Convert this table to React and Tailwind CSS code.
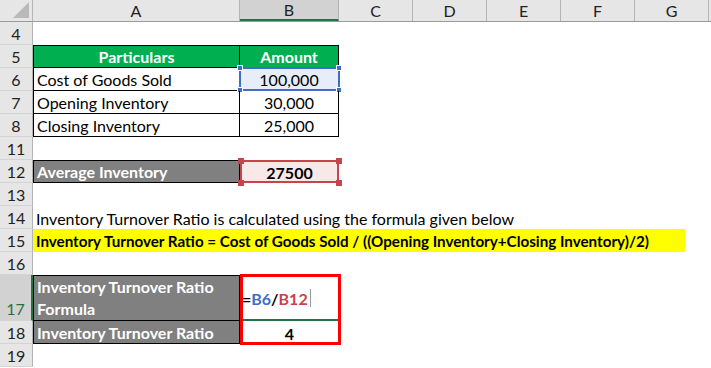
import React from 'react';

const COLS = ['A', 'B', 'C', 'D', 'E', 'F', 'G'];
const WIDTHS = ['w-[207px]', 'w-[99px]', 'w-[74px]', 'w-[74px]', 'w-[74px]', 'w-[74px]', 'w-[74px]'];

function Handle({ className }) {
  return <span className={`absolute w-[6px] h-[6px] ${className}`} />;
}

function RowHead({ n, tall, active }) {
  return (
    <div
      className={`w-[33px] shrink-0 flex justify-center border-b border-[#d4d4d4] text-[16px] text-[#222] ${tall ? 'items-end pb-[1px]' : 'items-center'} ${active ? 'bg-[#d2d2d2] border-r-2 border-r-[#217346] text-[#217346]' : 'bg-[#e6e6e6] border-r border-r-[#b4b4b4]'}`}
    >
      {n}
    </div>
  );
}

function Row({ n, tall, active, children }) {
  return (
    <div className={`flex ${tall ? 'h-[46px]' : 'h-[23px]'}`}>
      <RowHead n={n} tall={tall} active={active} />
      <div className="flex-1 flex relative">{children}</div>
    </div>
  );
}

export default function App() {
  return (
    <div className="w-[711px] h-[368px] overflow-hidden bg-white font-['Lato','Liberation_Sans',sans-serif] leading-[21px] text-black select-none">
      {/* column header */}
      <div className="flex h-[22px] bg-[#e6e6e6] border-b border-[#9b9b9b]">
        <div className="w-[33px] shrink-0 relative border-r border-[#b4b4b4]">
          <svg className="absolute right-[3px] bottom-[3px]" width="16" height="16" viewBox="0 0 16 16">
            <polygon points="16,0 16,16 0,16" fill="#b9b9b9" />
          </svg>
        </div>
        {COLS.map((c, i) => (
          <div
            key={c}
            className={`${WIDTHS[i]} shrink-0 flex items-center justify-center text-[16px] text-[#222] border-r border-[#b4b4b4] ${c === 'B' ? 'bg-[#d2d2d2] border-b-2 border-b-[#217346]' : ''}`}
          >
            {c}
          </div>
        ))}
      </div>

      <Row n={4} />

      <Row n={5}>
        <div className="w-[207px] bg-[#00b050] border border-black text-white font-bold text-[16px] flex items-end justify-center">
          Particulars
        </div>
        <div className="w-[99px] bg-[#00b050] border border-l-0 border-black text-white font-bold text-[16px] flex items-end justify-center">
          Amount
        </div>
      </Row>

      <Row n={6}>
        <div className="w-[207px] border-x border-b border-black text-[16px] flex items-end pl-[3px]">
          Cost of Goods Sold
        </div>
        <div className="w-[99px] border-r border-b border-black text-[16px] flex items-end justify-center relative bg-[#e8eef9]">
          100,000
          <div className="absolute -left-[1px] -top-[1px] w-[101px] h-[24px] border-2 border-[#3e6fc4]" />
          <Handle className="-left-[3px] -top-[3px] bg-[#3e6fc4] border border-white" />
          <Handle className="-right-[4px] -top-[3px] bg-[#3e6fc4] border border-white" />
          <Handle className="-left-[3px] -bottom-[3px] bg-[#3e6fc4] border border-white" />
          <Handle className="-right-[4px] -bottom-[3px] bg-[#3e6fc4] border border-white" />
        </div>
      </Row>

      <Row n={7}>
        <div className="w-[207px] border-x border-b border-black text-[16px] flex items-end pl-[3px]">
          Opening Inventory
        </div>
        <div className="w-[99px] border-r border-b border-black text-[16px] flex items-end justify-center">
          30,000
        </div>
      </Row>

      <Row n={8}>
        <div className="w-[207px] border-x border-b border-black text-[16px] flex items-end pl-[3px]">
          Closing Inventory
        </div>
        <div className="w-[99px] border-r border-b border-black text-[16px] flex items-end justify-center">
          25,000
        </div>
      </Row>

      <Row n={11} />

      <Row n={12}>
        <div className="w-[207px] bg-[#808080] border border-black text-white font-bold text-[16px] flex items-end pl-[3px]">
          Average Inventory
        </div>
        <div className="w-[99px] bg-[#f9e8e8] text-[16px] font-bold flex items-end justify-center relative">
          27500
          <div className="absolute left-0 top-0 w-[99px] h-[23px] border-2 border-[#c8434c]" />
          <Handle className="-left-[2px] -top-[2px] bg-[#c8434c]" />
          <Handle className="-right-[3px] -top-[2px] bg-[#c8434c]" />
          <Handle className="-left-[2px] -bottom-[3px] bg-[#c8434c]" />
          <Handle className="-right-[3px] -bottom-[3px] bg-[#c8434c]" />
        </div>
      </Row>

      <Row n={13} />

      <Row n={14}>
        <div className="flex items-end pl-[3px] text-[16px] whitespace-nowrap">
          Inventory Turnover Ratio is calculated using the formula given below
        </div>
      </Row>

      <Row n={15}>
        <div className="w-[652px] bg-[#ffff00] flex items-end pl-[3px] text-[15.2px] font-bold whitespace-nowrap">
          Inventory Turnover Ratio = Cost of Goods Sold / ((Opening Inventory+Closing Inventory)/2)
        </div>
      </Row>

      <Row n={16} />

      <Row n={17} tall active>
        <div className="w-[207px] bg-[#808080] border border-black text-white font-bold text-[16px] leading-[22px] flex flex-col justify-end pl-[3px]">
          <span>Inventory Turnover Ratio</span>
          <span>Formula</span>
        </div>
        <div className="w-[99px] relative flex items-center pl-[2px] text-[16px] font-bold">
          <span>=</span>
          <span className="text-[#3b6fc9]">B6</span>
          <span>/</span>
          <span className="text-[#c8434c]">B12</span>
          <span className="ml-[2px] w-px h-[18px] bg-[#999]" />
          <div className="absolute left-[2px] right-0 bottom-0 h-[2px] bg-[#217346]" />
        </div>
      </Row>

      <Row n={18}>
        <div className="w-[207px] bg-[#808080] border-x border-b border-black text-white font-bold text-[16px] flex items-end pl-[3px]">
          Inventory Turnover Ratio
        </div>
        <div className="w-[99px] text-[16px] font-bold flex items-end justify-center">
          4
        </div>
        <div className="absolute left-[207px] -top-[47px] w-[101px] h-[71px] border-[3px] border-[#ff0000] pointer-events-none" />
      </Row>

      <Row n={19} />
    </div>
  );
}
